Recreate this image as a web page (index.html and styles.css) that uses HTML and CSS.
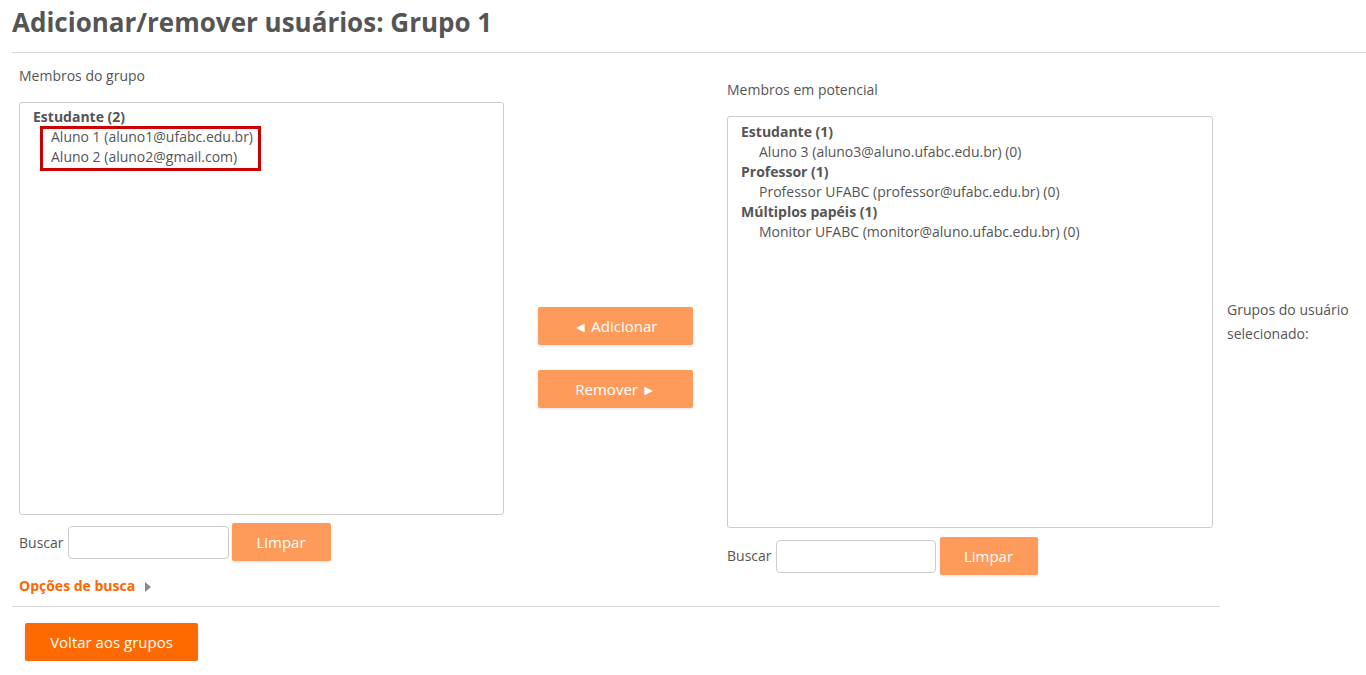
FILE: index.html
```html
<!DOCTYPE html>
<html lang="pt-BR">
<head>
  <meta charset="UTF-8">
  <title>Adicionar/remover usuários</title>
  <link rel="stylesheet" href="styles.css">
</head>
<body>
  <div class="page">
    <h2 class="title">Adicionar/remover usuários: Grupo 1</h2>
    <hr class="top-rule">

    <div class="groups">
      <!-- membros atuais -->
      <div class="col col-left">
        <label class="col-label">Membros do grupo</label>
        <div class="listbox listbox-left">
          <div class="grp">Estudante (2)</div>
          <div class="item">Aluno 1 (aluno1@ufabc.edu.br)</div>
          <div class="item">Aluno 2 (aluno2@gmail.com)</div>
          <div class="highlight"></div>
        </div>
        <div class="search">
          <span>Buscar</span>
          <input type="text" class="search-input">
          <button class="btn btn-light">Limpar</button>
        </div>
        <div class="options">Opções de busca <span class="caret"></span></div>
      </div>

      <!-- botoes -->
      <div class="col col-mid">
        <button class="btn btn-light btn-wide"><span class="arrow">&#9668;</span> Adicionar</button>
        <button class="btn btn-light btn-wide">Remover <span class="arrow">&#9658;</span></button>
      </div>

      <!-- membros em potencial -->
      <div class="col col-right">
        <label class="col-label">Membros em potencial</label>
        <div class="listbox listbox-right">
          <div class="grp">Estudante (1)</div>
          <div class="item">Aluno 3 (aluno3@aluno.ufabc.edu.br) (0)</div>
          <div class="grp">Professor (1)</div>
          <div class="item">Professor UFABC (professor@ufabc.edu.br) (0)</div>
          <div class="grp">Múltiplos papéis (1)</div>
          <div class="item">Monitor UFABC (monitor@aluno.ufabc.edu.br) (0)</div>
        </div>
        <div class="search">
          <span>Buscar</span>
          <input type="text" class="search-input">
          <button class="btn btn-light">Limpar</button>
        </div>
      </div>

      <div class="col col-info">Grupos do usuário selecionado:</div>
    </div>

    <hr class="bottom-rule">
    <button class="btn btn-dark">Voltar aos grupos</button>
  </div>
</body>
</html>
```

FILE: styles.css
```css
body {
  margin: 0;
  font-family: "Open Sans", "Liberation Sans", sans-serif;
  font-size: 14px;
  line-height: 20px;
  color: #555;
  background: #fff;
}
.page {
  padding-left: 12px;
}
.title {
  margin: 5px 0 0;
  font-size: 26px;
  line-height: 34px;
  font-weight: 700;
  color: #555;
}
.top-rule {
  margin: 13px 0 0;
  border: 0;
  border-top: 1px solid #d6d6d6;
}
.groups {
  display: flex;
  align-items: flex-start;
}
.col-left {
  margin-left: 7px;
  margin-top: 13px;
  width: 485px;
}
.col-mid {
  width: 223px;
  margin-top: 254px;
  display: flex;
  flex-direction: column;
  align-items: center;
  gap: 25px;
}
.col-right {
  margin-top: 27px;
  width: 486px;
}
.col-info {
  margin-left: 14px;
  margin-top: 245px;
  width: 125px;
  line-height: 24px;
}
.col-label {
  display: block;
}
.listbox {
  position: relative;
  margin-top: 16px;
  border: 1px solid #ccc;
  border-radius: 3px;
  padding: 4px 13px;
  box-sizing: border-box;
}
.listbox-left {
  height: 413px;
}
.listbox-right {
  height: 412px;
  padding-top: 5px;
}
.grp {
  font-weight: 700;
}
.item {
  padding-left: 18px;
}
.highlight {
  position: absolute;
  left: 20px;
  top: 23px;
  width: 221px;
  height: 45px;
  box-sizing: border-box;
  border: 3px solid #c00;
}
.search {
  display: flex;
  align-items: center;
  margin-top: 8px;
}
.col-left .search span {
  padding-top: 2px;
}
.col-right .search {
  margin-top: 9px;
}
.search-input {
  margin-left: 4px;
  width: 161px;
  height: 33px;
  box-sizing: border-box;
  border: 1px solid #ccc;
  border-radius: 4px;
}
.col-right .search-input {
  width: 160px;
}
.search .btn {
  margin-left: 3px;
  width: 99px;
}
.col-right .search .btn {
  margin-left: 4px;
  width: 98px;
}
.btn {
  height: 38px;
  border: none;
  border-radius: 2px;
  font-family: inherit;
  font-size: 15px;
  color: #fff;
  cursor: pointer;
  box-shadow: 0 1px 3px rgba(0,0,0,0.12);
}
.btn-light {
  background-color: #fe9b5a;
}
.btn-wide {
  width: 155px;
}
.arrow {
  font-size: 14px;
}
.btn-dark {
  margin: 16px 0 0 13px;
  width: 173px;
  background-color: #ff6a00;
}
.options {
  margin-top: 15px;
  font-weight: 700;
  color: #f60;
}
.caret {
  display: inline-block;
  margin-left: 6px;
  width: 0;
  height: 0;
  border-top: 5px solid transparent;
  border-bottom: 5px solid transparent;
  border-left: 6px solid #888;
  vertical-align: -1px;
}
.bottom-rule {
  margin: 10px 0 0;
  width: 1208px;
  border: 0;
  border-top: 1px solid #d6d6d6;
}
```
